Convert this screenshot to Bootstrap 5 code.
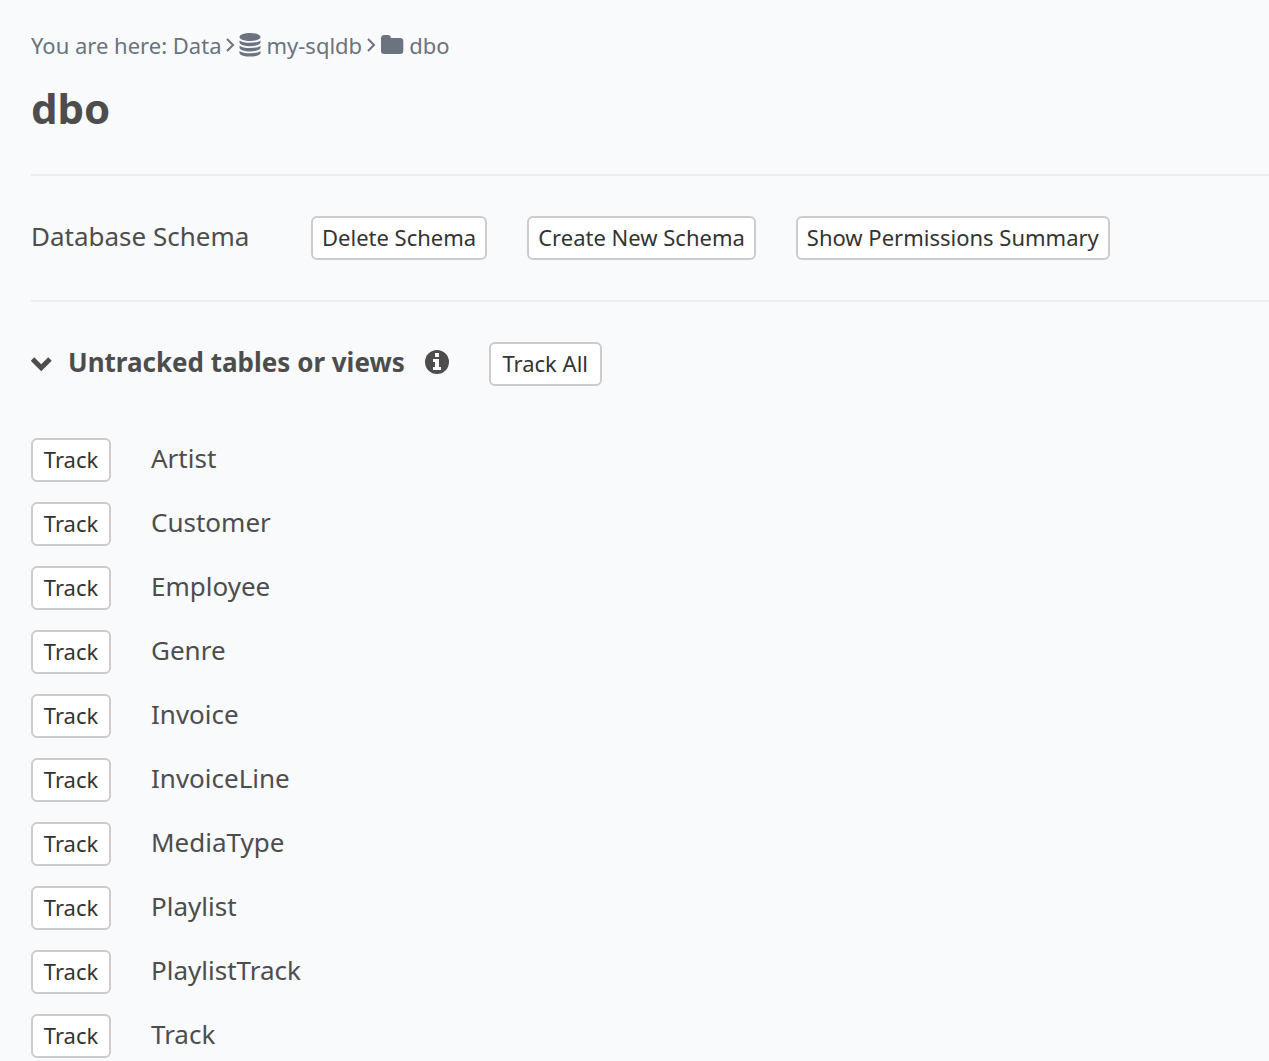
<!DOCTYPE html>
<html lang="en">
<head>
<meta charset="utf-8">
<meta name="viewport" content="width=device-width, initial-scale=1">
<title>dbo - Data</title>
<link href="https://cdn.jsdelivr.net/npm/bootstrap@5.3.0/dist/css/bootstrap.min.css" rel="stylesheet">
<style>
  body { background: #f9fafc; color: #4d4d4d; font-family: "Noto Sans", "Open Sans", sans-serif; font-size: 26px; line-height: 40px; }
  .page-body { padding: 28px 0 0 31px; }
  .trail { font-size: 22px; line-height: 34px; color: #6b7280; }
  .trail a { color: inherit; text-decoration: none; }
  .trail-icon { margin-right: 5px; }
  .page-title { font-size: 42px; line-height: 60px; font-weight: 700; margin: 16px 0 36px; }
  .schema-bar { border-top: 2px solid #ebedee; border-bottom: 2px solid #ebedee; padding: 40px 0; }
  .schema-label { width: 240px; }
  .text-label { padding-bottom: 4px; }
  .btn-plain { height: 44px; padding: 0 9px 2px; border: 2px solid #ccc; border-radius: 6px; background: #fff; color: #333; font-size: 22px; line-height: 38px; white-space: nowrap; }
  .btn-plain:hover { background: #ebebeb; border-color: #adadad; color: #333; }
  .gap-wide { gap: 40px; }
  .section-row { padding: 40px 0 52px; }
  .section-title { font-size: 26px; line-height: 40px; font-weight: 700; margin: 0 20px 0 16px; }
  .btn-all { width: 113px; margin-left: 40px; }
  .track-list { gap: 20px; }
  .btn-track { width: 80px; }
</style>
<script src="https://cdn.jsdelivr.net/npm/bootstrap@5.3.0/dist/js/bootstrap.bundle.min.js"></script>
</head>
<body>
<main class="page-body">
  <nav class="trail d-flex align-items-center" aria-label="Breadcrumb">
    <span>You are here: <a href="#">Data</a></span>
    <svg class="mx-1" width="10" height="16" viewBox="0 0 10 16" fill="none" stroke="currentColor" stroke-width="2" aria-hidden="true"><path d="M2 2l6 6-6 6"/></svg>
    <a href="#" class="d-flex align-items-center"><svg class="trail-icon" width="22" height="26" viewBox="0 0 22 26" fill="currentColor" aria-hidden="true"><path d="M11 1c5.500 0 10.500 1.600 10.500 4S16.500 9 11 9 .5 7.400.5 5 5.500 1 11 1z"/><path id="disk" d="M.5 8.500c2 1.700 6 2.300 10.500 2.300s8.500-.6 10.500-2.300v2c0 2.100-5 3.700-10.500 3.700S.5 12.600.5 10.500z"/><use href="#disk" y="5.200"/><use href="#disk" y="10.400"/></svg><span>my-sqldb</span></a>
    <svg class="mx-1" width="10" height="16" viewBox="0 0 10 16" fill="none" stroke="currentColor" stroke-width="2" aria-hidden="true"><path d="M2 2l6 6-6 6"/></svg>
    <a href="#" class="d-flex align-items-center"><svg class="trail-icon" width="24" height="22" viewBox="0 0 24 22" fill="currentColor" aria-hidden="true"><path d="M1 4a3.300 3.300 0 0 1 3.300-3h3.400A3.300 3.300 0 0 1 11 4h9a3.300 3.300 0 0 1 3.300 3.300v9.400A3.300 3.300 0 0 1 20 20H4.300A3.300 3.300 0 0 1 1 16.700z"/></svg><span>dbo</span></a>
  </nav>
  <h1 class="page-title">dbo</h1>

  <section class="schema-bar d-flex align-items-center gap-wide">
    <span class="schema-label text-label">Database Schema</span>
    <button type="button" class="btn btn-plain">Delete Schema</button>
    <button type="button" class="btn btn-plain">Create New Schema</button>
    <button type="button" class="btn btn-plain">Show Permissions Summary</button>
  </section>

  <section>
    <div class="section-row d-flex align-items-center">
      <svg width="21" height="16" viewBox="0 0 21 16" fill="none" stroke="currentColor" stroke-width="5" aria-hidden="true"><path d="M1.500 3l8.700 8.700L19 3"/></svg>
      <h2 class="section-title text-label">Untracked tables or views</h2>
      <svg class="mb-1" width="24" height="24" viewBox="0 0 24 24" aria-hidden="true"><circle cx="12" cy="12" r="12" fill="currentColor"/><path d="M10 3h4v4h-4zM8 9h6v8h2v3H8v-3h2v-5H8z" fill="#f9fafc"/></svg>
      <button type="button" class="btn btn-plain btn-all">Track All</button>
    </div>
    <ul class="track-list list-unstyled d-flex flex-column mb-0">
      <li class="d-flex align-items-center gap-wide"><button type="button" class="btn btn-plain btn-track">Track</button><span class="text-label">Artist</span></li>
      <li class="d-flex align-items-center gap-wide"><button type="button" class="btn btn-plain btn-track">Track</button><span class="text-label">Customer</span></li>
      <li class="d-flex align-items-center gap-wide"><button type="button" class="btn btn-plain btn-track">Track</button><span class="text-label">Employee</span></li>
      <li class="d-flex align-items-center gap-wide"><button type="button" class="btn btn-plain btn-track">Track</button><span class="text-label">Genre</span></li>
      <li class="d-flex align-items-center gap-wide"><button type="button" class="btn btn-plain btn-track">Track</button><span class="text-label">Invoice</span></li>
      <li class="d-flex align-items-center gap-wide"><button type="button" class="btn btn-plain btn-track">Track</button><span class="text-label">InvoiceLine</span></li>
      <li class="d-flex align-items-center gap-wide"><button type="button" class="btn btn-plain btn-track">Track</button><span class="text-label">MediaType</span></li>
      <li class="d-flex align-items-center gap-wide"><button type="button" class="btn btn-plain btn-track">Track</button><span class="text-label">Playlist</span></li>
      <li class="d-flex align-items-center gap-wide"><button type="button" class="btn btn-plain btn-track">Track</button><span class="text-label">PlaylistTrack</span></li>
      <li class="d-flex align-items-center gap-wide"><button type="button" class="btn btn-plain btn-track">Track</button><span class="text-label">Track</span></li>
    </ul>
  </section>
</main>
</body>
</html>
